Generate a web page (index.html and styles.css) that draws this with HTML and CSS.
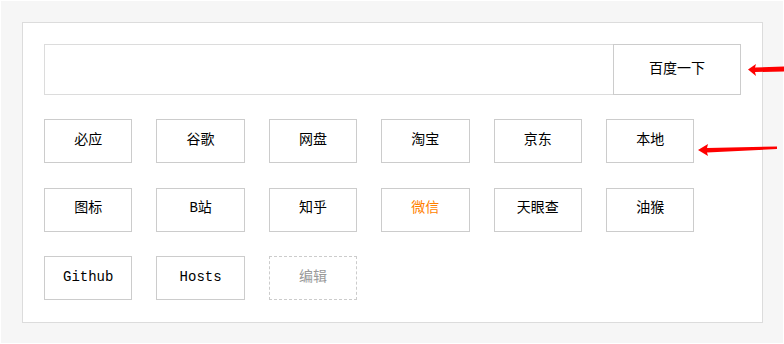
FILE: index.html
```html
<!DOCTYPE html>
<html lang="zh-CN">
<head>
  <meta charset="UTF-8">
  <title>导航</title>
  <link rel="stylesheet" href="styles.css">
</head>
<body>
  <div class="page">
    <div class="panel">
      <form class="search" onsubmit="return false">
        <input type="text" class="search-input">
        <button class="search-btn">百度一下</button>
      </form>
      <div class="links">
        <a class="link">必应</a>
        <a class="link">谷歌</a>
        <a class="link">网盘</a>
        <a class="link">淘宝</a>
        <a class="link">京东</a>
        <a class="link">本地</a>
        <a class="link">图标</a>
        <a class="link">B站</a>
        <a class="link">知乎</a>
        <a class="link hot">微信</a>
        <a class="link">天眼查</a>
        <a class="link">油猴</a>
        <a class="link">Github</a>
        <a class="link">Hosts</a>
        <a class="link edit">编辑</a>
      </div>
    </div>

    <svg class="arrow arrow-top" width="40" height="16" viewBox="0 0 40 16">
      <path d="M0 6.5 L8 1 L7 4.5 L40 3.5 L40 8.5 L7 9 L8 13 Z" fill="#f00"/>
    </svg>
    <svg class="arrow arrow-mid" width="82" height="16" viewBox="0 0 82 16">
      <path d="M0 8 L10 2 L9 6 L79 4.5 L79 7 L9 10.5 L10 14 Z" fill="#f00"/>
    </svg>
  </div>
</body>
</html>
```

FILE: styles.css
```css
body {
  margin: 0;
  padding: 1px;
  background: #fff;
  font-family: "Liberation Mono", "Noto Sans CJK SC", monospace;
  font-size: 14px;
  color: #000;
}

.page {
  position: relative;
  height: 342px;
  background: #f6f6f6;
  padding: 21px 0 0 21px;
  box-sizing: border-box;
}

.panel {
  width: 741px;
  height: 301px;
  box-sizing: border-box;
  background: #fff;
  border: 1px solid #dcdcdc;
  padding: 21px;
}

.search {
  display: flex;
  height: 51px;
  margin: 0;
}

.search-input {
  flex: 1;
  margin: 0;
  border: 1px solid #dcdcdc;
  border-right: none;
  outline: none;
  padding: 0 10px;
}

.search-btn {
  width: 128px;
  margin: 0;
  padding: 0 0 6px;
  border: 1px solid #ccc;
  background: #fff;
  font-family: inherit;
  font-size: 14px;
  color: #000;
  cursor: pointer;
}

.links {
  display: grid;
  grid-template-columns: repeat(6, 88.4px);
  column-gap: 24px;
  row-gap: 24.5px;
  margin-top: 24px;
}

.link {
  height: 44px;
  box-sizing: border-box;
  padding-bottom: 3px;
  border: 1px solid #ccc;
  line-height: 16px;
  display: flex;
  align-items: center;
  justify-content: center;
  cursor: pointer;
}

.link.hot {
  color: #ff7f00;
}

.link.edit {
  border: 1px dashed #ccc;
  color: #999;
}

/* annotation arrows */
.arrow {
  position: absolute;
}

.arrow-top {
  left: 747px;
  top: 62px;
}

.arrow-mid {
  left: 697px;
  top: 141px;
}
```
